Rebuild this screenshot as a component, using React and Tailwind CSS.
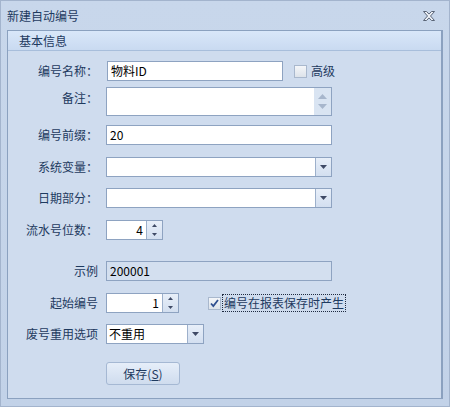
import React from 'react'

const FONT = { fontFamily: '"Noto Sans CJK SC", "Noto Sans", sans-serif' }

function Label({ children }) {
  return (
    <div className="w-[91px] shrink-0 pr-[1px] text-right text-[12px] leading-none text-[#1e3a5f]">
      {children}
    </div>
  )
}

function DownButton() {
  return (
    <div className="flex w-[16px] shrink-0 items-center justify-center border-l border-[#9db0cb] bg-gradient-to-b from-[#e8eff9] to-[#d3dff0]">
      <svg width="7" height="4" viewBox="0 0 7 4">
        <path d="M0 0h7L3.5 4z" fill="#3f4a66" />
      </svg>
    </div>
  )
}

function SpinButtons() {
  return (
    <div className="flex w-[16px] shrink-0 flex-col border-l border-[#9db0cb] bg-gradient-to-b from-[#e8eff9] to-[#d3dff0]">
      <div className="flex flex-1 items-center justify-center">
        <svg width="5" height="3" viewBox="0 0 5 3">
          <path d="M2.5 0L5 3H0z" fill="#3f4a66" />
        </svg>
      </div>
      <div className="flex flex-1 items-center justify-center">
        <svg width="5" height="3" viewBox="0 0 5 3">
          <path d="M0 0h5L2.5 3z" fill="#3f4a66" />
        </svg>
      </div>
    </div>
  )
}

function Checkbox({ checked }) {
  return (
    <div className="flex h-[13px] w-[13px] shrink-0 items-center justify-center border border-[#a9b8cd] bg-gradient-to-b from-[#f4f6f9] to-[#dde3ea]">
      {checked && (
        <svg width="9" height="9" viewBox="0 0 9 9">
          <path d="M1 4.5l2.3 2.5L8 1" fill="none" stroke="#2f4f8f" strokeWidth="1.8" />
        </svg>
      )}
    </div>
  )
}

export default function App() {
  return (
    <div
      style={FONT}
      className="flex h-[407px] w-[450px] flex-col overflow-hidden border border-[#a3b4cd] bg-gradient-to-b from-[#c8d7eb] to-[#c2d2e8]"
    >
      {/* Title bar */}
      <div className="flex h-[29px] shrink-0 items-center justify-between pl-[6px] pr-[14px]">
        <span className="text-[12px] text-[#1e3a5f]">新建自动编号</span>
        <svg width="12" height="10" viewBox="0 0 12 10">
          <path
            d="M0.5 0.5h3l2.5 2.6 2.5-2.6h3l-4 4.5 4 4.5h-3l-2.5-2.6-2.5 2.6h-3l4-4.5z"
            fill="#eef2f7"
            stroke="#5a6577"
            strokeWidth="1"
          />
        </svg>
      </div>

      {/* Group panel */}
      <div className="mx-[6px] flex h-[369px] flex-col border border-r-2 border-[#8ba1bf] bg-[#cfdcee]">
        <div className="flex h-[20px] shrink-0 items-center border-b border-[#a8bedb] bg-gradient-to-b from-[#d9e7f9] to-[#c9daf1] pl-[11px] text-[12px] text-[#1e3a5f]">
          基本信息
        </div>

        <div className="flex flex-col pt-[10px] text-[12px]">
          {/* 编号名称 */}
          <div className="flex h-[20px] items-center">
            <Label>编号名称：</Label>
            <div className="ml-[8px] flex h-[20px] w-[176px] items-center border border-[#8ea3c1] bg-white pl-[3px] text-black">
              物料ID
            </div>
            <div className="ml-[11px] flex items-center gap-[4px]">
              <Checkbox />
              <span className="text-[#1e3a5f]">高级</span>
            </div>
          </div>

          {/* 备注 */}
          <div className="mt-[6px] flex h-[29px] items-start">
            <div className="pt-[5px]">
              <Label>备注：</Label>
            </div>
            <div className="ml-[7px] flex h-[29px] w-[226px] justify-end border border-[#8ea3c1] bg-white">
              <div className="flex w-[17px] flex-col items-center justify-center gap-[5px] bg-[#d9e4f2]">
                <svg width="9" height="5" viewBox="0 0 9 5">
                  <path d="M4.5 0L9 5H0z" fill="#a7b6cc" />
                </svg>
                <svg width="9" height="5" viewBox="0 0 9 5">
                  <path d="M0 0h9L4.5 5z" fill="#a7b6cc" />
                </svg>
              </div>
            </div>
          </div>

          {/* 编号前缀 */}
          <div className="mt-[9px] flex h-[20px] items-center">
            <Label>编号前缀：</Label>
            <div className="ml-[7px] flex h-[20px] w-[226px] items-center border border-[#8ea3c1] bg-white pl-[3px] text-black">
              20
            </div>
          </div>

          {/* 系统变量 */}
          <div className="mt-[12px] flex h-[20px] items-center">
            <Label>系统变量：</Label>
            <div className="ml-[7px] flex h-[20px] w-[226px] justify-end border border-[#8ea3c1] bg-white">
              <DownButton />
            </div>
          </div>

          {/* 日期部分 */}
          <div className="mt-[11px] flex h-[20px] items-center">
            <Label>日期部分：</Label>
            <div className="ml-[7px] flex h-[20px] w-[226px] justify-end border border-[#8ea3c1] bg-white">
              <DownButton />
            </div>
          </div>

          {/* 流水号位数 */}
          <div className="mt-[12px] flex h-[20px] items-center">
            <Label>流水号位数：</Label>
            <div className="ml-[7px] flex h-[20px] w-[57px] border border-[#8ea3c1] bg-white">
              <div className="flex flex-1 items-center justify-end pr-[3px] text-black">4</div>
              <SpinButtons />
            </div>
          </div>

          {/* 示例 */}
          <div className="mt-[21px] flex h-[20px] items-center">
            <Label>示例</Label>
            <div className="ml-[7px] flex h-[20px] w-[226px] items-center border border-[#8ea3c1] bg-[#d3dfef] pl-[3px] text-black">
              200001
            </div>
          </div>

          {/* 起始编号 */}
          <div className="mt-[12px] flex h-[20px] items-center">
            <Label>起始编号</Label>
            <div className="ml-[7px] flex h-[20px] w-[73px] border border-[#8ea3c1] bg-white">
              <div className="flex flex-1 items-center justify-end pr-[3px] text-black">1</div>
              <SpinButtons />
            </div>
            <div className="ml-[29px] flex items-center gap-[1px]">
              <Checkbox checked />
              <span className="border border-dotted border-[#1e2a40] px-[1px] leading-[16px] text-[#1e3a5f]">
                编号在报表保存时产生
              </span>
            </div>
          </div>

          {/* 废号重用选项 */}
          <div className="mt-[11px] flex h-[20px] items-center">
            <Label>废号重用选项</Label>
            <div className="ml-[7px] flex h-[20px] w-[98px] border border-[#8ea3c1] bg-white">
              <div className="flex flex-1 items-center pl-[2px] text-black">不重用</div>
              <DownButton />
            </div>
          </div>

          {/* 保存 */}
          <div className="mt-[18px] flex">
            <button className="ml-[98px] flex h-[23px] w-[74px] items-center justify-center rounded-[3px] border border-[#a5b8d3] bg-gradient-to-b from-[#e6eef9] to-[#cfdcee] text-[12px] text-[#1e3a5f]">
              保存(<span className="underline">S</span>)
            </button>
          </div>
        </div>
      </div>
    </div>
  )
}
